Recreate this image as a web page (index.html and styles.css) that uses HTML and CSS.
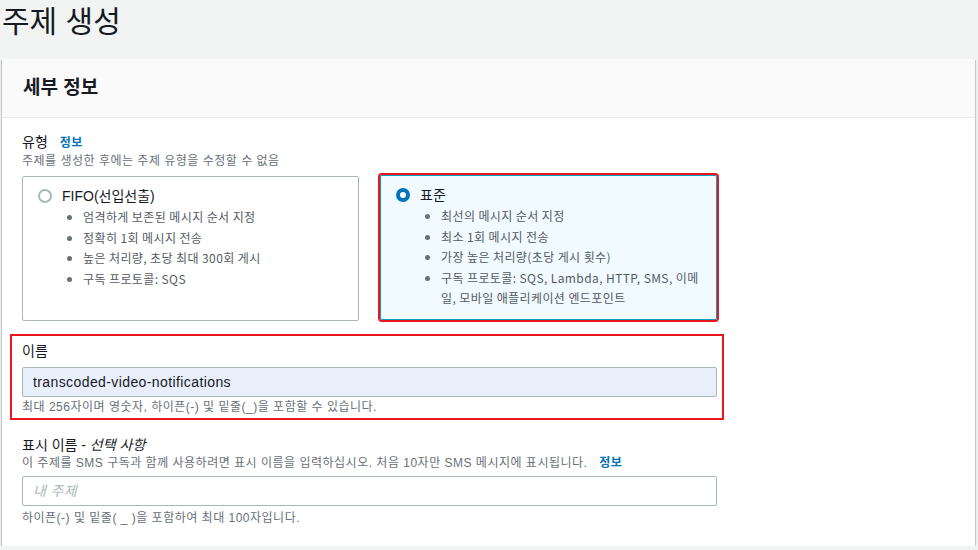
FILE: index.html
```html
<!DOCTYPE html>
<html>
<head>
  <meta charset="utf-8">
  <link rel="stylesheet" href="styles.css">
</head>
<body>
  <div class="page">
    <h1 class="page-title">주제 생성</h1>

    <div class="card">
      <div class="card-header">
        <h2>세부 정보</h2>
      </div>

      <div class="card-body">
        <div class="field">
          <div class="label">유형 <a href="#" class="info">정보</a></div>
          <div class="desc">주제를 생성한 후에는 주제 유형을 수정할 수 없음</div>

          <div class="tiles">
            <label class="tile">
              <div class="tile-title">
                <span class="radio"></span>
                FIFO(선입선출)
              </div>
              <ul class="tile-list">
                <li>엄격하게 보존된 메시지 순서 지정</li>
                <li>정확히 1회 메시지 전송</li>
                <li>높은 처리량, 초당 최대 300회 게시</li>
                <li>구독 프로토콜: SQS</li>
              </ul>
            </label>
            <label class="tile selected">
              <div class="tile-title">
                <span class="radio checked"></span>
                표준
              </div>
              <ul class="tile-list">
                <li>최선의 메시지 순서 지정</li>
                <li>최소 1회 메시지 전송</li>
                <li>가장 높은 처리량(초당 게시 횟수)</li>
                <li>구독 프로토콜: SQS, Lambda, HTTP, SMS, 이메일, 모바일 애플리케이션 엔드포인트</li>
              </ul>
            </label>
          </div>
        </div>

        <div class="field highlight">
          <div class="label">이름</div>
          <input class="input filled" type="text" value="transcoded-video-notifications">
          <div class="hint">최대 256자이며 영숫자, 하이픈(-) 및 밑줄(_)을 포함할 수 있습니다.</div>
        </div>

        <div class="field display-name">
          <div class="label">표시 이름 - <i>선택 사항</i></div>
          <div class="desc">이 주제를 SMS 구독과 함께 사용하려면 표시 이름을 입력하십시오. 처음 10자만 SMS 메시지에 표시됩니다. <a href="#" class="info">정보</a></div>
          <input class="input" type="text" placeholder="내 주제">
          <div class="hint">하이픈(-) 및 밑줄( _ )을 포함하여 최대 100자입니다.</div>
        </div>
      </div>
    </div>
  </div>
</body>
</html>
```

FILE: styles.css
```css
body {
  margin: 0;
  background: #f2f3f3;
  font-family: "Liberation Sans", "Noto Sans CJK KR", sans-serif;
  color: #16191f;
}

.page {
  padding: 0 3px 0 2px;
}

.page-title {
  margin: 0 0 15px 0;
  font-size: 30px;
  font-weight: 400;
  line-height: 44px;
}

.card {
  background: white;
  box-shadow: 0 1px 1px 0 rgba(0, 28, 36, 0.3), 1px 1px 1px 0 rgba(0, 28, 36, 0.15), -1px 1px 1px 0 rgba(0, 28, 36, 0.15);
}

.card-header {
  background: #fafafa;
  border-bottom: 1px solid #eaeded;
  padding: 18px 21px;
}

.card-header h2 {
  margin: 0;
  font-size: 19px;
  font-weight: 700;
  line-height: 22px;
}

.card-body {
  padding: 14px 258px 20px 20px;
}

.label {
  font-size: 14px;
  line-height: 20px;
}

.info {
  margin-left: 8px;
  font-size: 12px;
  font-weight: 700;
  letter-spacing: 0.5px;
  color: #0073bb;
  text-decoration: none;
}

.desc {
  font-size: 12px;
  line-height: 16px;
  letter-spacing: 0.5px;
  color: #687078;
}

.desc .info {
  margin-left: 8px;
}

.tiles {
  display: grid;
  grid-template-columns: 1fr 1fr;
  gap: 21px;
  margin-top: 7px;
}

.tile {
  display: block;
  border: 1px solid #aab7b8;
  border-radius: 2px;
  padding: 9px 16px 10px 15px;
}

.tile.selected {
  background: #f1faff;
  border-color: #00a1c9;
  outline: 2px solid #e8161f;
  margin-top: -1px;
  margin-bottom: 1px;
}

.tile-title {
  display: flex;
  align-items: center;
  gap: 10px;
  font-size: 14px;
  line-height: 20px;
}

.radio {
  width: 14px;
  height: 14px;
  box-sizing: border-box;
  border: 2px solid #aab7b8;
  border-radius: 50%;
  background: white;
}

.radio.checked {
  border: 4px solid #0073bb;
}

.tile-list {
  margin: 1px 0 0 0;
  padding-left: 45px;
  font-family: "Noto Sans CJK KR", sans-serif;
  font-size: 12px;
  line-height: 20.5px;
  letter-spacing: 0.4px;
  color: #545b64;
}

.tile-list li::marker {
  color: #687078;
}

.field.highlight {
  margin: 13px -7px 0 -12px;
  padding: 5px 5px 3px 10px;
  border: 2px solid #e8161f;
}

.input {
  display: block;
  box-sizing: border-box;
  width: 100%;
  height: 30px;
  margin-top: 6px;
  padding: 0 10px;
  border: 1px solid #aab7b8;
  border-radius: 2px;
  background: white;
  font-family: inherit;
  font-size: 14px;
  letter-spacing: 0.4px;
  color: #16191f;
}

.input.filled {
  background: #e8effb;
}

.input::placeholder {
  color: #aab7b8;
  font-style: italic;
}

.hint {
  margin-top: 2px;
  font-size: 12px;
  line-height: 16px;
  letter-spacing: 0.5px;
  color: #687078;
}

.display-name {
  margin-top: 15px;
}

.display-name .input {
  margin-top: 5px;
}

.display-name .hint {
  margin-top: 4px;
}
```
